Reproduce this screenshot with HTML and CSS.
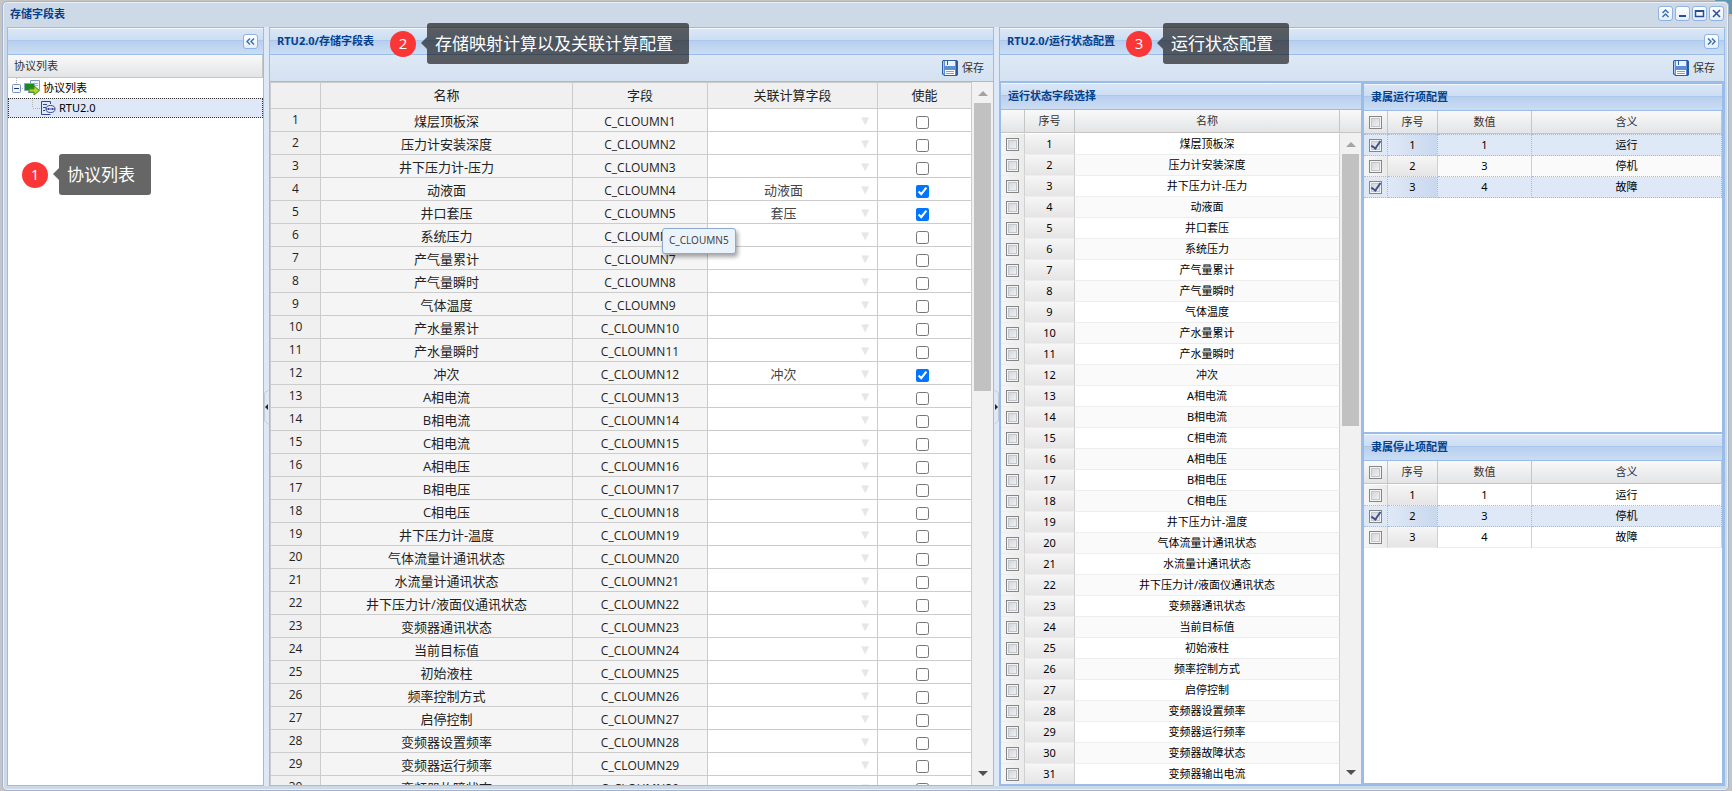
FILE: index.html
```html
<!DOCTYPE html>
<html lang="zh-CN">
<head>
<meta charset="utf-8">
<title>存储字段表</title>
<link rel="stylesheet" href="styles.css">
</head>
<body>
<svg class="defs" aria-hidden="true">
  <symbol id="save" viewBox="0 0 16 16">
    <path d="M1 .5h14l.5.5v14l-.5.5H2L.5 14V1z" fill="#5d8fd6" stroke="#2d5da8"/>
    <path d="M14.5 1v14" stroke="#2b57a0"/>
    <path d="M1.500 1.500v12" stroke="#a9c8f2"/>
    <path d="M3 1h10v5H3z" fill="#eaf3fd"/>
    <path d="M5.500 1v4" stroke="#2d5da8"/>
    <path d="M3 10h10v5H3z" fill="#fff"/>
    <path d="M4 11.500h8M4 13.500h8" stroke="#78bd4a"/>
  </symbol>
</svg>
<main class="window">
  <header class="titlebar">
    <h1>存储字段表</h1>
    <div class="tools">
      <button class="tool" aria-label="折叠"><svg viewBox="0 0 15 15"><path d="M4.500 7l3-3 3 3M4.500 11l3-3 3 3"/></svg></button>
      <button class="tool" aria-label="最小化"><svg viewBox="0 0 15 15"><path class="dark" d="M4 10h7"/></svg></button>
      <button class="tool" aria-label="最大化"><svg viewBox="0 0 15 15"><path class="thin" d="M3.500 4v6.500h8V4"/><path class="dark" d="M3 5h9"/></svg></button>
      <button class="tool" aria-label="关闭"><svg viewBox="0 0 15 15"><path class="thin" d="M4 4l7 7M11 4l-7 7"/></svg></button>
    </div>
  </header>
  <div class="layout">
    <section class="panel tree-panel">
      <div class="bar bar-end"><button class="tool" aria-label="收起"><svg viewBox="0 0 15 15"><path d="M7 4.500l-3 3 3 3M11 4.500l-3 3 3 3"/></svg></button></div>
      <div class="tree-head">协议列表</div>
      <ul class="tree">
        <li class="node">
          <svg class="toggle" viewBox="0 0 16 20"><path d="M8.500 0v6M14 10.500h2" stroke="#b5b5b5" stroke-dasharray="1 1"/><rect x="4.500" y="6.500" width="8" height="8" rx="1" fill="#f3f6fa" stroke="#7a93b4"/><path d="M6 10.500h5" stroke="#1d3a66"/></svg>
          <svg class="icon" viewBox="0 0 16 16"><path d="M6.500.5h9v9h-9z" fill="#eef4fa" stroke="#7d9cc0"/><path d="M8 3.500h6M8 5.500h6" stroke="#9db7d4"/><path d="M.5 3.500h10v7H.5z" fill="#1d8a1d" stroke="#8aa6c4"/><path d="M4 12.500h6" stroke="#6c8bb0"/><path d="M5 9h5V6l5.500 4.500L10 15v-3H5z" fill="#a8d92a" stroke="#4e8a10"/></svg>
          <span>协议列表</span>
        </li>
        <li class="node leaf selected">
          <svg class="elbow" viewBox="0 0 32 20"><path d="M24.500 0v10M25 10.500h7" fill="none" stroke="#b5b5b5" stroke-dasharray="1 1"/></svg>
          <svg class="icon" viewBox="0 0 16 16"><path d="M10.500 4V1.500h-9v13h9M3 4.500h4M3 7.500h3M3 10.500h2" fill="none" stroke="#35458f"/><ellipse cx="10.500" cy="9" rx="4.500" ry="3.500" fill="#e4eafb" stroke="#35458f"/><path d="M6 9h9M8.500 8v2M12.500 8v2" stroke="#35458f"/></svg>
          <span>RTU2.0</span>
        </li>
      </ul>
    </section>
    <div class="splitter"><svg viewBox="0 0 5 36"><path d="M4.500 1L.5 4v28l4 3" fill="none" stroke="#c5cbd5"/><path d="M4 15v6l-3-3z" fill="#222"/></svg></div>
    <section class="panel">
      <div class="bar"><h2>RTU2.0/存储字段表</h2></div>
      <div class="toolbar"><button class="save"><svg viewBox="0 0 16 16"><use href="#save"/></svg>保存</button></div>
      <div class="grid-body">
        <div class="clip">
          <table class="sheet">
            <colgroup><col class="c-index"><col><col class="c-field"><col class="c-calc"><col class="c-flag"></colgroup>
            <thead><tr><th></th><th>名称</th><th>字段</th><th>关联计算字段</th><th>使能</th></tr></thead>
            <tbody id="sheet-rows"></tbody>
          </table>
        </div>
        <div class="scroll"><i class="up"></i><i class="thumb"></i><i class="down"></i></div>
      </div>
    </section>
    <div class="splitter"><svg viewBox="0 0 5 36"><path d="M.5 1l4 3v28l-4 3" fill="none" stroke="#c5cbd5"/><path d="M1 15v6l3-3z" fill="#222"/></svg></div>
    <section class="panel">
      <div class="bar"><h2>RTU2.0/运行状态配置</h2><button class="tool" aria-label="展开"><svg viewBox="0 0 15 15"><path d="M4 4.500l3 3-3 3M8 4.500l3 3-3 3"/></svg></button></div>
      <div class="toolbar"><button class="save"><svg viewBox="0 0 16 16"><use href="#save"/></svg>保存</button></div>
      <div class="split">
        <section class="panel">
          <div class="bar"><h3>运行状态字段选择</h3></div>
          <div class="grid-body">
            <div class="clip">
              <table class="list">
                <colgroup><col class="c-check"><col class="c-index"><col></colgroup>
                <thead><tr><th></th><th>序号</th><th>名称</th></tr></thead>
                <tbody id="state-rows"></tbody>
              </table>
            </div>
            <div class="side"><div class="side-head"></div><div class="scroll"><i class="up"></i><i class="thumb"></i><i class="down"></i></div></div>
          </div>
        </section>
        <div class="stack">
          <section class="panel">
            <div class="bar"><h3>隶属运行项配置</h3></div>
            <div class="clip">
              <table class="list">
                <colgroup><col class="c-check"><col class="c-index"><col class="c-value"><col></colgroup>
                <thead><tr><th><input type="checkbox" aria-label="全选"></th><th>序号</th><th>数值</th><th>含义</th></tr></thead>
                <tbody id="run-rows"></tbody>
              </table>
            </div>
          </section>
          <section class="panel">
            <div class="bar"><h3>隶属停止项配置</h3></div>
            <div class="clip">
              <table class="list">
                <colgroup><col class="c-check"><col class="c-index"><col class="c-value"><col></colgroup>
                <thead><tr><th><input type="checkbox" aria-label="全选"></th><th>序号</th><th>数值</th><th>含义</th></tr></thead>
                <tbody id="stop-rows"></tbody>
              </table>
            </div>
          </section>
        </div>
      </div>
    </section>
  </div>
</main>
<div class="tip">C_CLOUMN5</div>
<aside class="note note-1"><b>1</b><p>协议列表</p></aside>
<aside class="note note-2"><b>2</b><p>存储映射计算以及关联计算配置</p></aside>
<aside class="note note-3"><b>3</b><p>运行状态配置</p></aside>
<script src="app.js"></script>
</body>
</html>
```
FILE: styles.css
```css
* { box-sizing: border-box; }
body {
  margin: 0;
  height: 100vh;
  overflow: hidden;
  display: flex;
  background: linear-gradient(90deg, #c6c5c3 99%, transparent 99%), linear-gradient(#5f96b2 0 14px, #e3b765 14px 16px, #c6c5c3 16px);
  font: 11px/20px "Noto Sans", "Noto Sans CJK SC", sans-serif;
  color: #333;
}
h1, h2, h3, p, ul { margin: 0; padding: 0; }
h1, h2, h3 { font-size: 11px; font-weight: bold; color: #04408c; }
button { font: inherit; color: inherit; padding: 0; }
input { margin: 0; }
.defs { position: absolute; width: 0; height: 0; }

.window {
  flex: 1;
  min-width: 0;
  margin: 1px 3px 0 2px;
  padding: 0 3px 4px 4px;
  display: flex;
  flex-direction: column;
  border: 1px solid #a2b1cc;
  border-radius: 5px;
  box-shadow: inset 0 0 0 1px #e9f0f8;
  background: #ced9e7;
}
.titlebar {
  height: 25px;
  padding: 0 1px 2px 3px;
  display: flex;
  align-items: center;
  justify-content: space-between;
}
.tools { display: flex; gap: 2px; }
.tool {
  width: 15px;
  height: 15px;
  border: 1px solid #8db2e3;
  border-radius: 3px;
  background: linear-gradient(#fff, #e3eefb);
}
.tool svg { display: block; width: 15px; height: 15px; margin: -1px; }
.tool path { fill: none; stroke: #3b72ab; stroke-width: 1.5; }
.tool .dark { stroke: #2a4d96; stroke-width: 2; }
.tool .thin { stroke: #2a4d96; }

.layout {
  flex: 1;
  min-height: 0;
  display: grid;
  grid-template-columns: 257px 5px minmax(0, 725fr) 5px minmax(0, 726fr);
  background: #dfe8f6;
}
.splitter { display: flex; align-items: center; }
.splitter svg { width: 5px; height: 36px; }
.panel {
  min-width: 0;
  min-height: 0;
  display: flex;
  flex-direction: column;
  border: 1px solid #99bce8;
  background: #fff;
}
.bar {
  flex: none;
  height: 27px;
  padding: 0 5px 0 7px;
  display: flex;
  align-items: center;
  justify-content: space-between;
  border-bottom: 1px solid #99bce8;
  background: linear-gradient(#dae7f6, #cddef3 45%, #abc7ec 46%, #abc7ec 50%, #b8cfee 51%, #cbddf3);
  box-shadow: inset 0 1px #f1f6fc;
}
.bar-end { justify-content: flex-end; }
.toolbar {
  flex: none;
  height: 27px;
  padding: 0 9px;
  display: flex;
  align-items: center;
  justify-content: flex-end;
  border-bottom: 1px solid #99bce8;
  background: linear-gradient(#dfe9f5, #d3e1f1);
}
.save { display: flex; align-items: center; gap: 4px; border: 0; background: none; }
.save svg { width: 16px; height: 16px; }

.tree-head {
  height: 23px;
  padding: 0 6px;
  line-height: 22px;
  border-right: 1px solid #c5c5c5;
  border-bottom: 1px solid #c5c5c5;
  background: linear-gradient(#f9f9f9, #e3e4e6);
}
.tree { list-style: none; }
.node { height: 20px; display: flex; align-items: center; color: #000; }
.toggle { width: 16px; height: 20px; }
.elbow { width: 32px; height: 20px; }
.icon { width: 16px; height: 16px; margin-right: 3px; }
.node.selected { background: #dfe8f6; outline: 1px dotted #333; outline-offset: -1px; }

.grid-body { flex: 1; min-height: 0; display: flex; }
.clip { flex: 1; min-width: 0; min-height: 0; overflow: hidden; }
table { width: 100%; table-layout: fixed; border-collapse: separate; border-spacing: 0; }
th, td { padding: 0; font-weight: normal; text-align: center; white-space: nowrap; overflow: hidden; }
.c-index { width: 50px; }
.c-field { width: 135px; }
.c-calc { width: 170px; }
.c-flag { width: 94px; }
.c-check { width: 24px; }
.c-value { width: 94px; }

.sheet {
  border-top: 1px solid #ccc;
  border-left: 1px solid #ccc;
  font: 13px/20px "Open Sans", "Noto Sans CJK SC", sans-serif;
  color: #222;
}
.sheet th, .sheet td { height: 23px; border-right: 1px solid #ccc; border-bottom: 1px solid #ccc; }
.sheet th { background: #f0f0f0; }
.sheet tbody th { font-size: 12px; }
.sheet thead th { height: 26px; line-height: 25px; }
.sheet td { padding-top: 2px; background: #fff; }
.sheet .fixed { background: #f5f5f5; }
.sheet .code { padding-top: 4px; font-size: 12px; line-height: 18px; }
.calc { display: flex; padding-right: 6px; color: #444; }
.calc span { flex: 1; }
.calc button { width: 12px; border: 0; background: none; color: #e6e6e6; font: 10px/18px "DejaVu Sans", sans-serif; }
.flag { display: block; width: 13px; height: 13px; margin: 3px auto 0 38px; }

.list thead th {
  height: 23px;
  line-height: 22px;
  border-right: 1px solid #c5c5c5;
  border-bottom: 1px solid #c5c5c5;
  background: linear-gradient(#f9f9f9, #e3e4e6);
}
.list td { height: 21px; border-right: 1px solid #d0d0d0; border-bottom: 1px solid #ededed; color: #000; }
.list tr:first-child td { height: 22px; border-top: 1px solid #fff; }
.list tr:nth-child(even) td { background: #fafafa; }
.list tbody tr td:first-child { background: linear-gradient(90deg, #f6f6f6, #ebebeb); }
.list tbody tr td:nth-child(2) { background: linear-gradient(#f6f6f6, #e6e4e4); }
.list tbody tr.selected td { background: #dfe8f6; border-color: #a3bae9; border-style: none dotted dotted none; }
.list tbody tr.selected:first-child td { border-top-style: dotted; }
.list tbody tr.selected td:nth-child(2) { background: linear-gradient(90deg, #dfe8f6, #c9d8ef); }
.list tbody tr.before td { border-bottom: 1px dotted #a3bae9; }
.list input {
  appearance: none;
  display: block;
  width: 13px;
  height: 13px;
  margin: 0 auto;
  border: 1px solid #868686;
  box-shadow: inset 0 0 0 1px #f4f4f4, inset 0 0 0 2px #c3c6ca;
  background: linear-gradient(135deg, #cbcfd5, #f8f8f8);
}
.list input:checked { display: grid; place-content: center; }
.list input:checked::after {
  content: "";
  width: 4px;
  height: 8px;
  margin-bottom: 2px;
  border: solid #3c548f;
  border-width: 0 2px 2px 0;
  transform: rotate(35deg);
}

.side { display: flex; flex-direction: column; }
.side-head { height: 23px; border-bottom: 1px solid #c5c5c5; background: linear-gradient(#f9f9f9, #e3e4e6); }
.scroll {
  width: 21px;
  padding: 9px 2px;
  display: flex;
  flex-direction: column;
  align-items: center;
  background: #f1f1f1;
}
.side .scroll { flex: 1; }
.scroll .up, .scroll .down { border: 5px solid transparent; }
.scroll .up { border-top: 0; border-bottom-color: #a3a3a3; }
.scroll .down { border-bottom: 0; border-top-color: #505050; margin-top: auto; }
.scroll .thumb { width: 17px; height: 42%; margin-top: 7px; background: #c1c1c1; }
.side .thumb { height: 43%; }

.split { flex: 1; min-height: 0; display: grid; grid-template-columns: minmax(0, 1fr) minmax(0, 1fr); background: #99bce8; }
.stack { min-height: 0; display: flex; flex-direction: column; border: 1px solid #99bce8; }
.stack .panel { flex: 350 0 0; }
.stack .panel:last-child { flex-grow: 351; }

.tip {
  position: absolute;
  left: 662px;
  top: 228px;
  padding: 1px 6px 2px;
  font-size: 10px;
  line-height: 21px;
  border: 1px solid #8eaace;
  border-radius: 3px;
  background: #eaf3fc;
  box-shadow: 2px 3px 4px rgba(0, 0, 0, .35);
  color: #444;
}
.note { position: absolute; display: flex; align-items: center; gap: 11px; color: #fff; }
.note b {
  width: 26px;
  height: 26px;
  border-radius: 50%;
  background: #fb3636;
  font: 15px/24px "Open Sans", sans-serif;
  text-align: center;
}
.note p {
  position: relative;
  padding: 0 16px 0 8px;
  border-radius: 3px;
  background: rgba(0, 0, 0, .6);
  font-size: 17px;
  line-height: 41px;
}
.note p::before {
  content: "";
  position: absolute;
  left: -6px;
  top: 14px;
  border: solid transparent;
  border-width: 6px 6px 6px 0;
  border-right-color: rgba(0, 0, 0, .6);
}
.note-1 { left: 22px; top: 154px; }
.note-2 { left: 390px; top: 23px; }
.note-3 { left: 1126px; top: 23px; }
```
FILE: app.js
```js
const names = ["煤层顶板深", "压力计安装深度", "井下压力计-压力", "动液面", "井口套压", "系统压力",
  "产气量累计", "产气量瞬时", "气体温度", "产水量累计", "产水量瞬时", "冲次", "A相电流", "B相电流", "C相电流",
  "A相电压", "B相电压", "C相电压", "井下压力计-温度", "气体流量计通讯状态", "水流量计通讯状态",
  "井下压力计/液面仪通讯状态", "变频器通讯状态", "当前目标值", "初始液柱", "频率控制方式", "启停控制",
  "变频器设置频率", "变频器运行频率", "变频器故障状态", "变频器输出电流"];
const linked = { 4: "动液面", 5: "套压", 12: "冲次" };

document.getElementById("sheet-rows").innerHTML = names.slice(0, 30).map((name, i) => {
  const n = i + 1;
  return `<tr><th>${n}</th><td class="fixed">${name}</td><td class="fixed code">C_CLOUMN${n}</td>
    <td><div class="calc"><span>${linked[n] || ""}</span><button aria-label="选择字段">▼</button></div></td>
    <td><input class="flag" type="checkbox" aria-label="使能 ${name}" ${linked[n] ? "checked" : ""}></td></tr>`;
}).join("");

document.getElementById("state-rows").innerHTML = names.map((name, i) =>
  `<tr><td><input type="checkbox" aria-label="${name}"></td><td>${i + 1}</td><td>${name}</td></tr>`
).join("");

const items = [[1, "运行"], [3, "停机"], [4, "故障"]];
function fill(id, chosen) {
  document.getElementById(id).innerHTML = items.map(([value, label], i) => {
    const on = chosen.includes(i);
    const cls = on ? "selected" : chosen.includes(i + 1) ? "before" : "";
    return `<tr class="${cls}"><td><input type="checkbox" aria-label="${label}" ${on ? "checked" : ""}></td>
      <td>${i + 1}</td><td>${value}</td><td>${label}</td></tr>`;
  }).join("");
}
fill("run-rows", [0, 2]);
fill("stop-rows", [1]);
```
